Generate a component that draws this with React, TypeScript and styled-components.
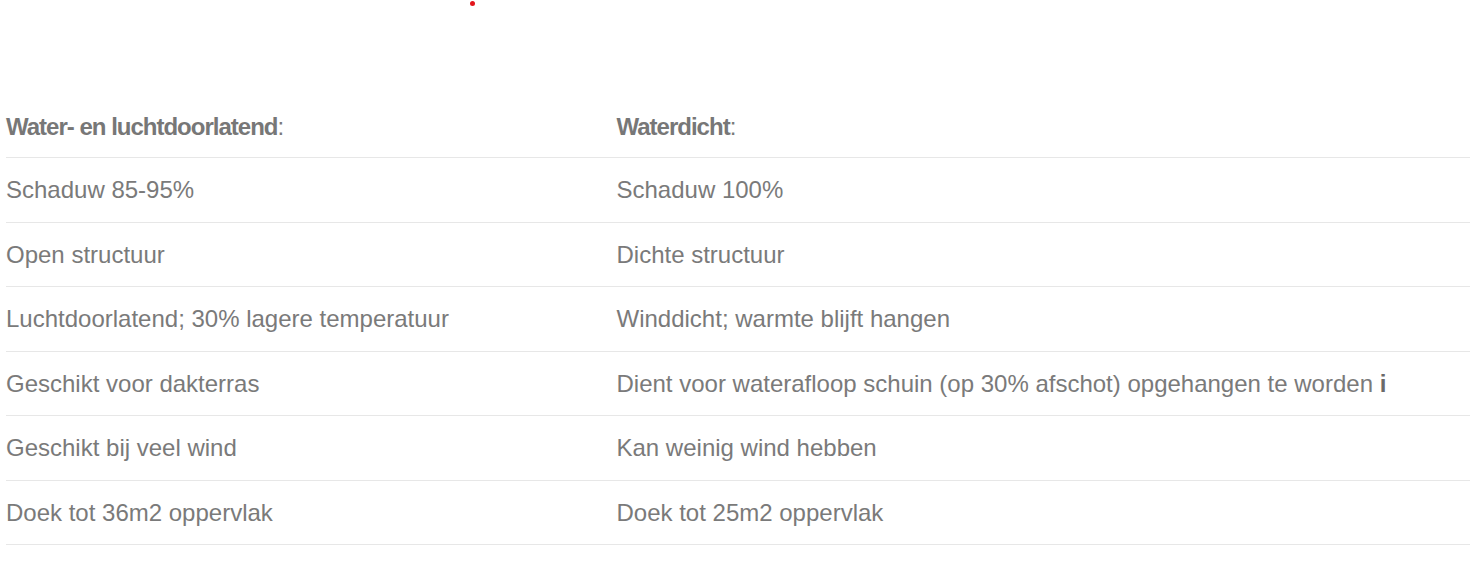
import React from "react";
import styled, { createGlobalStyle } from "styled-components";

const rows: [string, string, boolean?][] = [
  ["Schaduw 85-95%", "Schaduw 100%"],
  ["Open structuur", "Dichte structuur"],
  ["Luchtdoorlatend; 30% lagere temperatuur", "Winddicht; warmte blijft hangen"],
  ["Geschikt voor dakterras", "Dient voor waterafloop schuin (op 30% afschot) opgehangen te worden", true],
  ["Geschikt bij veel wind", "Kan weinig wind hebben"],
  ["Doek tot 36m2 oppervlak", "Doek tot 25m2 oppervlak"],
];

const App = () => {
  return (
    <Page>
      <GlobalStyle />
      <TopBar>
        <RedDot />
      </TopBar>
      <Table>
        <HeadRow>
          <HeadCell>
            <strong>Water- en luchtdoorlatend</strong>:
          </HeadCell>
          <HeadCell>
            <strong>Waterdicht</strong>:
          </HeadCell>
        </HeadRow>
        {rows.map(([left, right, info], index) => (
          <Row key={index}>
            <Cell>{left}</Cell>
            <Cell>
              {right}
              {info ? <Info> i</Info> : null}
            </Cell>
          </Row>
        ))}
      </Table>
    </Page>
  );
};

export default App;

const GlobalStyle = createGlobalStyle`
  body {
    margin: 0;
    background: #ffffff;
    font-family: "Liberation Sans", Arial, sans-serif;
  }
`;

const Page = styled.div`
  width: 1470px;
  height: 587px;
  overflow: hidden;
  background: #ffffff;
`;

const TopBar = styled.div`
  height: 93px;
  padding-left: 470px;
`;

const RedDot = styled.div`
  width: 5px;
  height: 5px;
  margin-top: 1px;
  border-radius: 50%;
  background: #e3161c;
`;

const Table = styled.div`
  margin-left: 6px;
  width: 1464px;
`;

const Row = styled.div`
  display: grid;
  grid-template-columns: 610.5px 1fr;
  border-bottom: 1.5px solid #e7e7e7;
`;

const HeadRow = styled(Row)`
  height: 64px;
  align-items: center;
  padding-top: 2px;
  box-sizing: border-box;
`;

const HeadCell = styled.div`
  font-size: 24px;
  line-height: 30px;
  color: #7a7a7a;

  strong {
    font-weight: 700;
    letter-spacing: -1px;
    color: #777777;
  }
`;

const Cell = styled.div`
  font-size: 24px;
  line-height: 31.5px;
  padding: 16px 0;
  color: #7a7a7a;
`;

const Info = styled.strong`
  font-weight: 700;
  color: #6a6a6a;
`;
